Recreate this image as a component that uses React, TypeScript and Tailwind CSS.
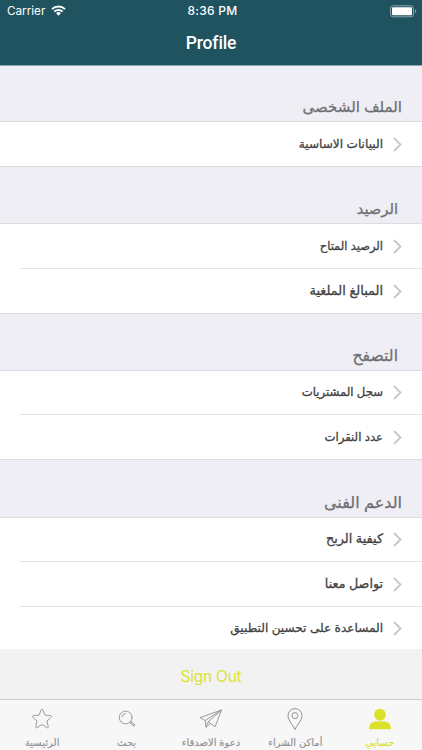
import type { ReactNode } from 'react';

interface Row {
  label: string;
  className: string;
}

interface Section {
  title: string;
  titleClass: string;
  rows: Row[];
}

const sections: Section[] = [
  {
    title: 'الملف الشخصى',
    titleClass: 'h-[55px] pr-[20px] pb-[4px] text-[15px]',
    rows: [{ label: 'البيانات الاساسية', className: 'h-[44px] text-[12.1px]' }],
  },
  {
    title: 'الرصيد',
    titleClass: 'h-[56px] pr-[24px] pb-[4px] text-[14.7px]',
    rows: [
      { label: 'الرصيد المتاح', className: 'h-[44px] text-[11.5px]' },
      { label: 'المبالغ الملغية', className: 'h-[44px] text-[12.9px]' },
    ],
  },
  {
    title: 'التصفح',
    titleClass: 'h-[56px] pr-[24px] pb-[4px] text-[15.7px]',
    rows: [
      { label: 'سجل المشتريات', className: 'h-[43px] text-[11.7px]' },
      { label: 'عدد النقرات', className: 'h-[44px] text-[11.7px]' },
    ],
  },
  {
    title: 'الدعم الفنى',
    titleClass: 'h-[57px] pr-[20px] pb-[5px] text-[16px]',
    rows: [
      { label: 'كيفية الربح', className: 'h-[43px] text-[12.8px]' },
      { label: 'تواصل معنا', className: 'h-[44px] text-[12.7px]' },
      { label: 'المساعدة على تحسين التطبيق', className: 'h-[43px] text-[12.1px]' },
    ],
  },
];

const StarIcon = () => (
  <svg width="22" height="22" viewBox="0 0 22 22" fill="none" stroke="currentColor" strokeWidth="0.9" strokeLinejoin="round">
    <path d="M10.200 1.800c.4-.8 1.200-.8 1.600 0l2.200 5.300 5.800.6c.8.1 1.100.9.5 1.500l-4.400 3.800 1.400 5.800c.2.800-.5 1.300-1.200.9L11 16.600l-5.100 3.100c-.7.4-1.400-.1-1.200-.9l1.400-5.800-4.400-3.800c-.6-.6-.3-1.400.5-1.500l5.800-.6Z" />
  </svg>
);

const SearchIcon = () => (
  <svg width="22" height="22" viewBox="0 0 22 22" fill="none" stroke="currentColor" strokeWidth="0.9" strokeLinecap="round">
    <circle cx="9.700" cy="9.500" r="6.400" />
    <path d="M5.900 9a4 4 0 0 1 3.300-3.300" />
    <path d="m14.200 14.400 1-1 3.500 3.300a.9.900 0 0 1-1.200 1.200Z" fill="currentColor" fillOpacity="0.35" />
  </svg>
);

const PlaneIcon = () => (
  <svg width="24" height="22" viewBox="0 0 24 22" fill="none" stroke="currentColor" strokeWidth="0.9" strokeLinejoin="round">
    <path d="M22.500 2 1 9.600 6.200 12.600 22.500 2 9 14 16.200 18.600Z" />
    <path d="M6.200 12.600 7 19.300 9 14M7 19.300l4.300-3.700" />
  </svg>
);

const PinIcon = () => (
  <svg width="18" height="24" viewBox="0 0 18 24" fill="none" stroke="currentColor" strokeWidth="1" strokeLinejoin="round">
    <path d="M9 22.500C7.400 18.400 2 13.400 2 8.600a7 7 0 0 1 14 0c0 4.800-5.400 9.800-7 13.900Z" />
    <circle cx="9" cy="8.600" r="3" />
  </svg>
);

const UserIcon = () => (
  <svg width="22" height="22" viewBox="0 0 22 22" fill="currentColor">
    <ellipse cx="11" cy="6.800" rx="5.800" ry="6" />
    <path d="M0 21.300C0 16 3.200 13.600 7 13.600h8c3.800 0 7 2.400 7 7.700Z" />
  </svg>
);

interface Tab {
  label: string;
  icon: ReactNode;
  active?: boolean;
}

const tabs: Tab[] = [
  { label: 'الرئيسية', icon: <StarIcon /> },
  { label: 'بحث', icon: <SearchIcon /> },
  { label: 'دعوة الاصدقاء', icon: <PlaneIcon /> },
  { label: 'أماكن الشراء', icon: <PinIcon /> },
  { label: 'حسابي', icon: <UserIcon />, active: true },
];

const Header = () => (
  <header className="h-[66px] shrink-0 border-b border-[#8ca7b0] bg-[#1f535f] text-white">
    <div className="grid h-[22px] grid-cols-3 items-center pr-[5px] pl-[7px] leading-none">
      <div className="flex items-center gap-[6px]">
        <span className="pt-[2px] text-[11.7px]">Carrier</span>
        <svg width="15" height="11" viewBox="0 0 15 11" fill="none" stroke="currentColor" strokeWidth="2">
          <path d="M1 4.100a9.300 9.300 0 0 1 13 0M3.300 6.600a6 6 0 0 1 8.400 0" />
          <path d="M5.100 8.300a3.400 3.400 0 0 1 4.800 0L7.500 10.700Z" fill="currentColor" stroke="none" />
        </svg>
      </div>
      <span className="pl-px text-center text-[12px] font-medium tracking-[0.3px]">8:36 PM</span>
      <svg className="justify-self-end" width="27" height="13" viewBox="0 0 27 13">
        <rect x="0.500" y="0.800" width="23" height="11" rx="2.500" fill="none" stroke="#8ba5ac" />
        <rect x="2" y="2.300" width="20" height="8" rx="1" fill="white" />
        <path d="M25 4.500c1.800.8 1.800 2.800 0 3.600Z" fill="#8ba5ac" />
      </svg>
    </div>
    <h1 className="pt-[9px] text-center font-['Roboto'] text-[17.5px] leading-[24px] font-medium tracking-[-0.15px]">Profile</h1>
  </header>
);

const App = () => {
  return (
    <div className="flex h-[750px] w-[422px] flex-col overflow-hidden bg-[#efeef4] font-['Inter','DejaVu_Sans',sans-serif]">
      <Header />
      <main className="h-[583px] shrink-0 overflow-hidden" dir="rtl">
        {sections.map((section) => (
          <section key={section.title}>
            <h2
              className={`flex items-end leading-[20px] text-[#6d6d72] [-webkit-text-stroke:0.25px_#6d6d72] ${section.titleClass}`}
            >
              <span>{section.title}</span>
            </h2>
            <ul className="border-y border-[#dddce1] bg-white">
              {section.rows.map((row, index) => (
                <li key={row.label}>
                  {index > 0 && <div className="ml-[20px] h-px bg-[#e2e2e4]" />}
                  <div className={`flex items-center gap-[10px] pr-[20px] text-[#414141] ${row.className}`}>
                    <svg className="shrink-0" width="9" height="15" viewBox="0 0 9 15" fill="none" stroke="#c7c7cc" strokeWidth="1.800">
                      <path d="m1 1 6.500 6.500L1 14" />
                    </svg>
                    <span className="pb-px leading-[20px] [-webkit-text-stroke:0.3px_#414141]">{row.label}</span>
                  </div>
                </li>
              ))}
            </ul>
          </section>
        ))}
      </main>
      <button className="h-[50px] shrink-0 bg-[#f2f2f2] pt-[6px] text-[15.500px] tracking-[-0.25px] text-[#dbe235]">Sign Out</button>
      <nav className="grid h-[51px] shrink-0 grid-cols-5 border-t border-[#cfcfcf] bg-[#f7f7f7]">
        {tabs.map((tab) => (
          <div
            key={tab.label}
            className={`flex flex-col items-center ${tab.active ? 'text-[#dbe029]' : 'text-[#929292]'}`}
          >
            <div className="flex h-[36px] items-center pt-[2px]">{tab.icon}</div>
            <span className="text-[10px] leading-[12px] whitespace-nowrap [-webkit-text-stroke:0.15px_currentColor]" dir="rtl">
              {tab.label}
            </span>
          </div>
        ))}
      </nav>
    </div>
  );
};

export default App;
